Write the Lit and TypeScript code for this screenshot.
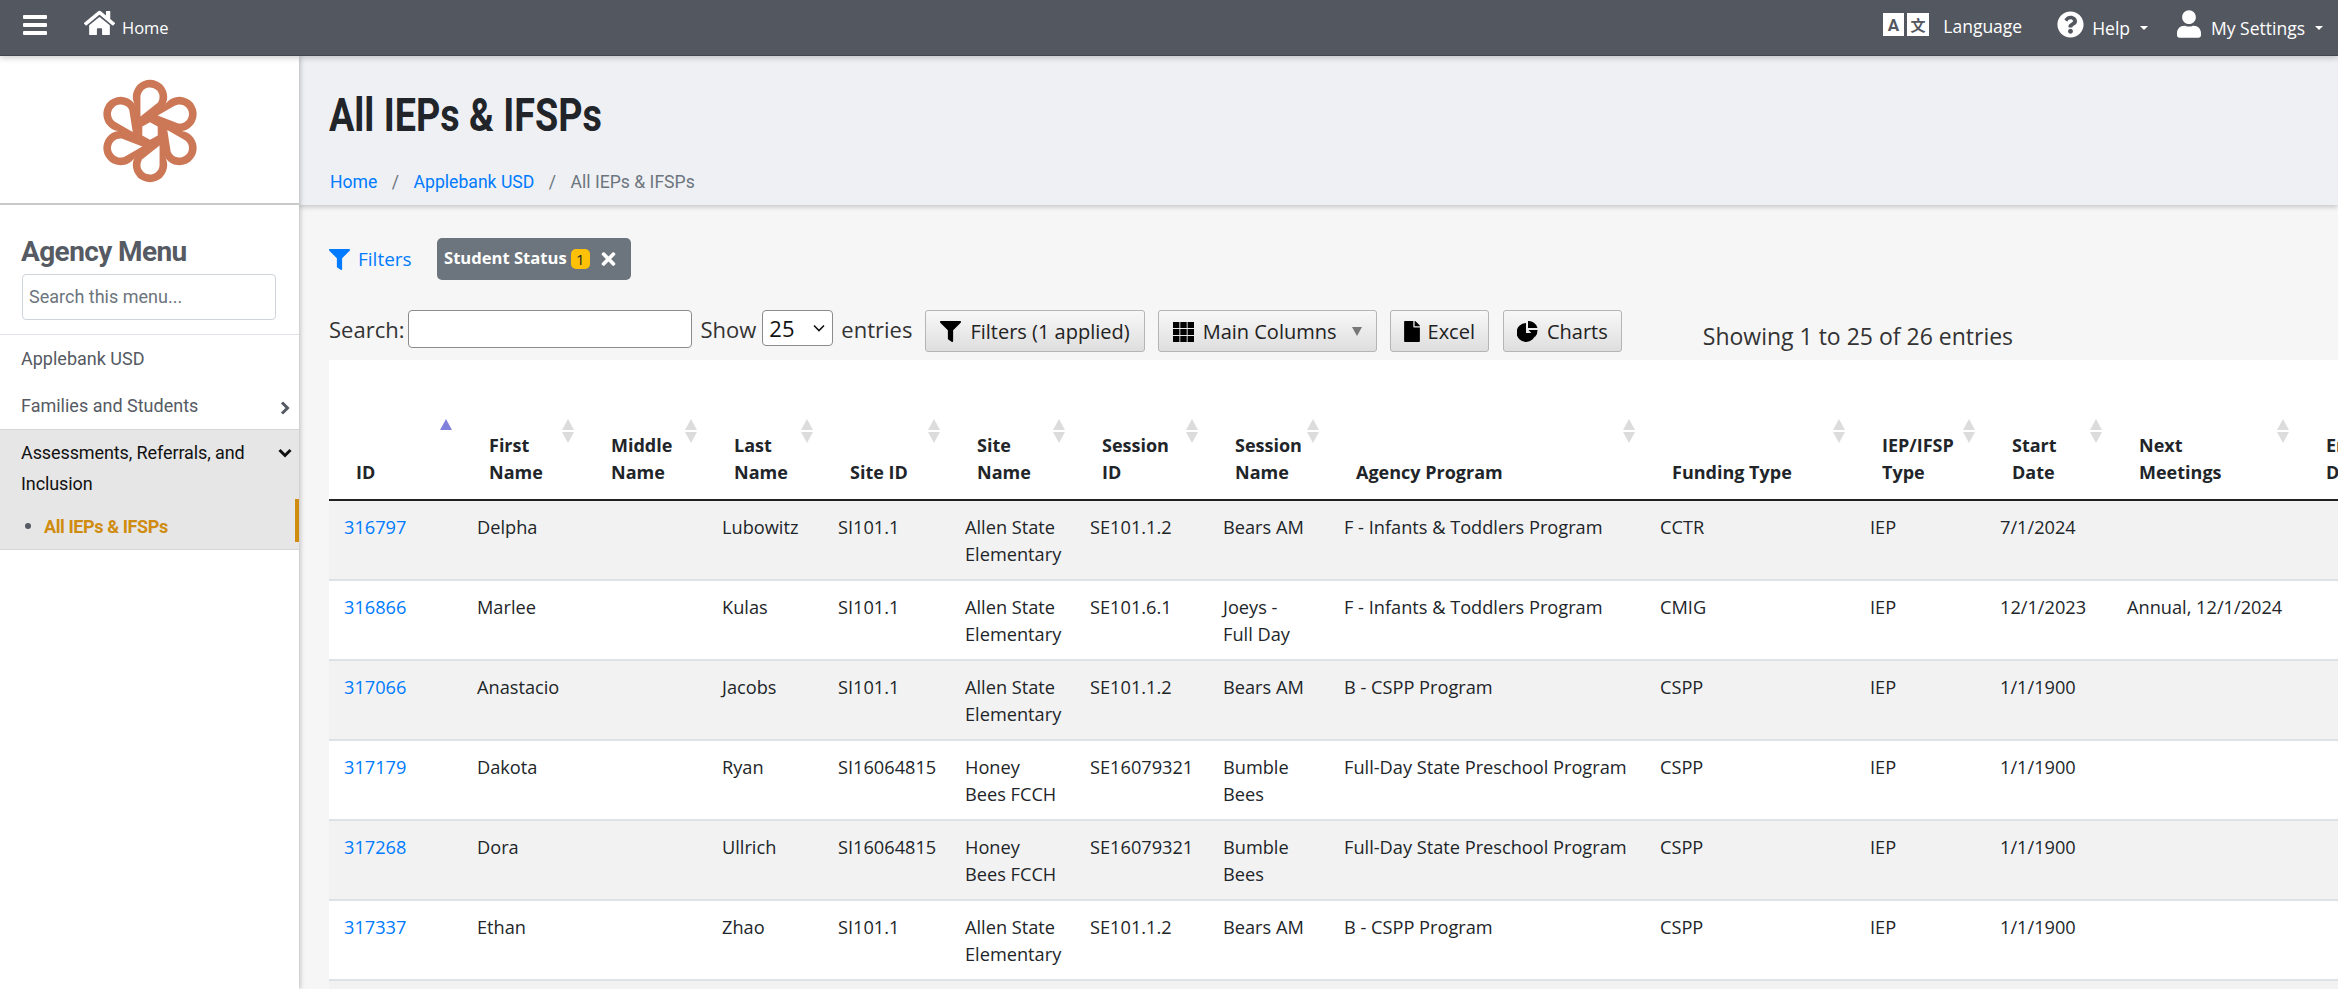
import { LitElement, html, css, svg } from "lit";
import { customElement } from "lit/decorators.js";

const P = {
  home: "M280.37 148.26L96 300.11V464a16 16 0 0 0 16 16l112.06-.29a16 16 0 0 0 15.92-16V368a16 16 0 0 1 16-16h64a16 16 0 0 1 16 16v95.64a16 16 0 0 0 16 16.05L464 480a16 16 0 0 0 16-16V300L295.67 148.26a12.19 12.19 0 0 0-15.3 0zM571.6 251.47L488 182.56V44.05a12 12 0 0 0-12-12h-56a12 12 0 0 0-12 12v72.61L318.47 43a48 48 0 0 0-61 0L4.34 251.47a12 12 0 0 0-1.6 16.9l25.5 31A12 12 0 0 0 45.15 301l235.22-193.74a12.19 12.19 0 0 1 15.3 0L530.9 301a12 12 0 0 0 16.9-1.6l25.5-31a12 12 0 0 0-1.7-16.93z",
  help: "M504 256c0 136.997-111.043 248-248 248S8 392.997 8 256C8 119.083 119.043 8 256 8s248 111.083 248 248zM262.655 90c-54.497 0-89.255 22.957-116.549 63.758-3.536 5.286-2.353 12.415 2.715 16.258l34.699 26.31c5.205 3.947 12.621 3.008 16.665-2.122 17.864-22.658 30.113-35.797 57.303-35.797 20.429 0 45.698 13.148 45.698 32.958 0 14.976-12.363 22.667-32.534 33.976C247.128 238.528 216 254.941 216 296v4c0 6.627 5.373 12 12 12h56c6.627 0 12-5.373 12-12v-1.333c0-28.462 83.186-29.647 83.186-106.667 0-58.002-60.165-102-116.531-102zM256 338c-25.365 0-46 20.635-46 46 0 25.364 20.635 46 46 46s46-20.636 46-46c0-25.365-20.635-46-46-46z",
  user: "M224 256c70.7 0 128-57.3 128-128S294.7 0 224 0 96 57.3 96 128s57.3 128 128 128zm89.6 32h-16.7c-22.2 10.2-46.9 16-72.9 16s-50.6-5.8-72.9-16h-16.7C60.2 288 0 348.2 0 422.4V464c0 26.5 21.5 48 48 48h352c26.5 0 48-21.5 48-48v-41.6c0-74.2-60.2-134.4-134.4-134.4z",
  filter: "M487.976 0H24.028C2.71 0-8.047 25.866 7.058 40.971L192 225.941V432c0 7.831 3.821 15.17 10.237 19.662l80 55.98C298.02 518.69 320 507.493 320 487.98V225.941l184.947-184.97C520.021 25.896 509.338 0 487.976 0z",
  times: "M242.72 256l100.07-100.07c12.28-12.28 12.28-32.19 0-44.48l-22.24-22.24c-12.28-12.28-32.19-12.28-44.48 0L176 189.28 75.93 89.21c-12.28-12.28-32.19-12.28-44.48 0L9.21 111.45c-12.28 12.28-12.28 32.19 0 44.48L109.28 256 9.21 356.07c-12.28 12.28-12.28 32.19 0 44.48l22.24 22.24c12.28 12.28 32.2 12.28 44.48 0L176 322.72l100.07 100.07c12.28 12.28 32.2 12.28 44.48 0l22.24-22.24c12.28-12.28 12.28-32.19 0-44.48L242.72 256z",
  file: "M224 136V0H24C10.7 0 0 10.7 0 24v464c0 13.3 10.7 24 24 24h336c13.3 0 24-10.7 24-24V160H248c-13.2 0-24-10.8-24-24zm160-14.1v6.1H256V0h6.1c6.4 0 12.5 2.5 17 7l97.9 98c4.5 4.5 7 10.6 7 16.9z",
};

const icon = (d: string, vb: string, cls: string) =>
  html`<svg class=${cls} viewBox=${vb} fill="currentColor"><path d=${d}></path></svg>`;

const petals = [0, 60, 120, 180, 240, 300];

const COLS: [string, string, number][] = [
  ["ID", "", 133],
  ["First", "Name", 122],
  ["Middle", "Name", 123],
  ["Last", "Name", 116],
  ["", "Site ID", 127],
  ["Site", "Name", 125],
  ["Session", "ID", 133],
  ["Session", "Name", 121],
  ["", "Agency Program", 316],
  ["", "Funding Type", 210],
  ["IEP/IFSP", "Type", 130],
  ["Start", "Date", 127],
  ["Next", "Meetings", 187],
  ["End", "Date", 130],
];

const ROWS: string[][] = [
  ["316797", "Delpha", "", "Lubowitz", "SI101.1", "Allen State Elementary", "SE101.1.2", "Bears AM", "F - Infants & Toddlers Program", "CCTR", "IEP", "7/1/2024", "", ""],
  ["316866", "Marlee", "", "Kulas", "SI101.1", "Allen State Elementary", "SE101.6.1", "Joeys -\nFull Day", "F - Infants & Toddlers Program", "CMIG", "IEP", "12/1/2023", "Annual, 12/1/2024", ""],
  ["317066", "Anastacio", "", "Jacobs", "SI101.1", "Allen State Elementary", "SE101.1.2", "Bears AM", "B - CSPP Program", "CSPP", "IEP", "1/1/1900", "", ""],
  ["317179", "Dakota", "", "Ryan", "SI16064815", "Honey Bees FCCH", "SE16079321", "Bumble Bees", "Full-Day State Preschool Program", "CSPP", "IEP", "1/1/1900", "", ""],
  ["317268", "Dora", "", "Ullrich", "SI16064815", "Honey Bees FCCH", "SE16079321", "Bumble Bees", "Full-Day State Preschool Program", "CSPP", "IEP", "1/1/1900", "", ""],
  ["317337", "Ethan", "", "Zhao", "SI101.1", "Allen State Elementary", "SE101.1.2", "Bears AM", "B - CSPP Program", "CSPP", "IEP", "1/1/1900", "", ""],
];

@customElement("app-root")
export class AppRoot extends LitElement {
  static styles = css`
    :host { display: block; width: 2338px; height: 989px; overflow: hidden; background: #f6f6f6; font-family: "Open Sans", "Noto Sans", sans-serif; color: #212529; }
    * { box-sizing: border-box; }
    a { color: #007bff; text-decoration: none; }

    .top { height: 56px; background: #53575f; border-bottom: 1px solid #43464d; color: #fff; display: flex; align-items: center; padding-left: 23px; position: relative; z-index: 3; box-shadow: 0 2px 6px rgba(0,0,0,.2); font-size: 16px; }
    .burger { width: 24px; height: 20px; display: flex; flex-direction: column; justify-content: space-between; margin-top: -6px; }
    .burger i { display: block; height: 4px; background: #fff; border-radius: 1px; }
    .home { display: flex; align-items: center; margin-left: 37px; }
    .home svg { width: 31px; height: 28px; margin-top: -10px; }
    .home span { margin-left: 7px; font-size: 16.5px; }
    .right { margin-left: auto; display: flex; align-items: center; padding-right: 15px; height: 100%; font-size: 17.5px; }
    .lang { width: 46px; height: 23px; margin-top: -6px; margin-right: 14px; }
    .lang-t { margin-top: -3px; margin-right: 35px; }
    .help { width: 27px; height: 27px; margin-top: -7px; margin-right: 8px; }
    .usr { width: 24px; height: 28px; margin-top: -7px; margin-right: 10px; }
    .caret { width: 0; height: 0; border-left: 4px solid transparent; border-right: 4px solid transparent; border-top: 4px solid #fff; margin-left: 10px; }
    .help-c { margin-right: 29px; }

    .body { display: flex; height: 933px; }
    .side { width: 299px; flex: none; background: #fff; box-shadow: 1px 0 5px rgba(0,0,0,.25); position: relative; z-index: 2; font-family: Roboto, sans-serif; color: #555a63; }
    .logo { height: 149px; border-bottom: 2px solid #c9c9c9; display: flex; justify-content: center; align-items: flex-start; padding-top: 23px; }
    .logo svg { width: 96px; height: 104px; }
    .side h2 { margin: 0; padding: 29px 0 0 21px; font-size: 28px; line-height: 36px; font-weight: 700; letter-spacing: -.6px; }
    .srch { display: block; margin: 4px 0 14px 22px; width: 254px; height: 46px; border: 1px solid #ced4da; border-radius: 4px; padding: 0 6px; font-size: 18px; line-height: 44px; color: #6c757d; }
    .srch-wrap { border-bottom: 1px solid #dfe2e6; }
    .item { display: flex; justify-content: space-between; align-items: center; font-size: 18px; padding: 0 9px 0 21px; height: 47px; }
    .item svg { width: 10px; height: 14px; margin-top: 4px; }
    .group { background: #e6e6e6; border-top: 1px solid #d5d5d5; border-bottom: 1px solid #d5d5d5; color: #111; height: 121px; }
    .group-h { display: flex; justify-content: space-between; font-size: 18px; line-height: 31px; padding: 7px 7px 0 21px; letter-spacing: -.1px; }
    .group-h svg { width: 14px; height: 10px; margin-top: 11px; flex: none; }
    .sub { display: flex; align-items: center; height: 43px; margin-top: 0; border-right: 4px solid #d08c10; font-size: 18px; font-weight: 700; color: #d08c10; padding: 11px 0 0 25px; letter-spacing: -.4px; }
    .sub i { width: 6px; height: 6px; border-radius: 50%; background: #555a63; margin-right: 13px; }

    .main { flex: 1; min-width: 0; overflow: hidden; }
    .hdr { height: 149px; background: #eff0f4; box-shadow: 0 2px 5px rgba(0,0,0,.2); padding: 32px 0 0 30px; font-family: Roboto, sans-serif; }
    .hdr h1 { margin: 0; font-size: 46px; font-weight: 700; line-height: 54px; color: #212529; transform: scaleX(.82); transform-origin: left center; white-space: nowrap; }
    .crumbs { margin-top: 27px; padding-left: 1px; font-size: 17.6px; line-height: 27px; color: #6c757d; display: flex; }
    .crumbs b { font-weight: 400; padding: 0 14.5px; }

    .chips { display: flex; align-items: center; height: 42px; margin: 33px 0 0 30px; }
    .flt { display: flex; align-items: center; color: #007bff; font-size: 19px; width: 108px; }
    .flt svg { width: 21px; height: 21px; margin-right: 8px; }
    .chip { width: 194px; height: 42px; background: #6c757d; border-radius: 5px; color: #fff; display: flex; align-items: center; padding-left: 7px; font-size: 16.6px; font-weight: 700; }
    .chip span { margin-top: -3px; }
    .bdg { width: 19px; height: 20px; border-radius: 5px; background: #ffc107; color: #212529; font-size: 15px; font-weight: 400; display: flex; justify-content: center; align-items: center; margin-left: 4px; }
    .chip svg { width: 15px; height: 20px; margin-left: 11px; }

    .bar { display: flex; align-items: flex-start; height: 50px; margin: 30px 0 0 30px; font-size: 22px; line-height: 38px; color: #333; }
    .inp { width: 284px; height: 38px; margin-left: 4px; border: 1px solid #8b8b8b; border-radius: 4px; background: #fff; flex: none; }
    .lab { margin-left: 8px; }
    .sel { width: 71px; height: 36px; margin-left: 6px; border: 1px solid #8b8b8b; border-radius: 4px; background: #fff; display: flex; align-items: center; padding-left: 6px; justify-content: space-between; padding-right: 7px; font-size: 22px; color: #111; flex: none; }
    .sel svg { width: 12px; height: 8px; }
    .btn { height: 42px; border: 1px solid #b5b5b5; border-radius: 3px; background: linear-gradient(#f8f8f8, #dedede); display: flex; align-items: center; padding: 1px 14px 0; font-size: 20px; line-height: 1; color: #222; flex: none; }
    .btn.tight { padding: 1px 13px 0; }
    .btn svg { margin-right: 9px; color: #000; }
    .btn .i1 { width: 21px; height: 21px; }
    .btn .i2 { width: 21px; height: 20px; }
    .btn .i3 { width: 16px; height: 21px; margin-right: 8px; }
    .btn .i4 { width: 21px; height: 21px; }
    .tri { width: 0; height: 0; border-left: 5px solid transparent; border-right: 5px solid transparent; border-top: 9px solid #777; margin-left: 15px; }
    .info { margin-left: 81px; margin-top: 7px; font-size: 23px; }
    .ml13 { margin-left: 13px; }
    .ml14 { margin-left: 14px; }

    .tw { margin-left: 30px; background: #fff; width: 2009px; }
    table { border-collapse: collapse; table-layout: fixed; font-size: 18.2px; line-height: 27px; width: 2100px; }
    th { position: relative; height: 140px; vertical-align: bottom; text-align: left; font-weight: 700; font-size: 18px; padding: 0 15px 13px 27px; border-bottom: 2px solid #222; color: #212529; }
    th i { position: absolute; right: 10px; width: 0; height: 0; border-left: 6px solid transparent; border-right: 6px solid transparent; }
    th .up { top: 59px; border-bottom: 11px solid #dcdcdc; }
    th .dn { top: 72px; border-top: 11px solid #dcdcdc; }
    th .up.on { border-bottom-color: #8181dc; }
    th .dn.on { border-top-color: transparent; }
    td { height: 80px; vertical-align: top; padding: 13px 15px 0; border-bottom: 2px solid #dee2e6; color: #212529; overflow: hidden; white-space: pre-line; }
    tr.odd td { background: #f2f2f2; }
    tr.blank td { background: #f2f2f2; border: 0; }
  `;

  logo() {
    return svg`<svg viewBox="-46.6 -50.5 93.2 101">
      <path d="M14.3 -24.75 L28.6 0 L14.3 24.75 L-14.3 24.75 L-28.6 0 L-14.3 -24.75 Z" fill="#cc7755"></path>
      ${petals.map((a) => svg`<circle transform="rotate(${a})" cx="0" cy="-33" r="16.7" fill="#cc7755"></circle>`)}
      ${petals.map((a) => svg`<path transform="rotate(${a})" d="M-9.3 -14 L-9.3 -33 A9.3 9.3 0 1 1 7.5 -27.5 Z" fill="#fff"></path>`)}
      <path d="M0 -8.6 L7.5 -4.3 V4.3 L0 8.6 L-7.5 4.3 V-4.3 Z" fill="#fff"></path>
    </svg>`;
  }

  render() {
    return html`
      <div class="top">
        <div class="burger"><i></i><i></i><i></i></div>
        <div class="home">${icon(P.home, "0 0 576 512", "")}<span>Home</span></div>
        <div class="right">
          <svg class="lang" viewBox="0 0 46 23">
            <rect x="0" y="0" width="21" height="23" fill="#fff"></rect>
            <rect x="24" y="0" width="22" height="23" fill="#fff"></rect>
            <text x="10.5" y="18" text-anchor="middle" font-size="17" font-weight="700" font-family="Roboto, sans-serif" fill="#53575f">A</text>
            <text x="35" y="18" text-anchor="middle" font-size="15" font-weight="700" font-family="'Noto Sans CJK SC', sans-serif" fill="#53575f">文</text>
          </svg>
          <span class="lang-t">Language</span>
          ${icon(P.help, "0 0 512 512", "help")}
          <span>Help</span><span class="caret help-c"></span>
          ${icon(P.user, "0 0 448 512", "usr")}
          <span>My Settings</span><span class="caret"></span>
        </div>
      </div>
      <div class="body">
        <div class="side">
          <div class="logo">${this.logo()}</div>
          <div class="srch-wrap">
            <h2>Agency Menu</h2>
            <div class="srch">Search this menu...</div>
          </div>
          <div class="item">Applebank USD</div>
          <div class="item">Families and Students
            <svg viewBox="0 0 10 14" fill="none" stroke="#555a63" stroke-width="3"><path d="M2 1.5 L7.5 7 L2 12.5"></path></svg>
          </div>
          <div class="group">
            <div class="group-h"><span>Assessments, Referrals, and<br />Inclusion</span>
              <svg viewBox="0 0 14 10" fill="none" stroke="#111" stroke-width="3"><path d="M1.5 2 L7 7.5 L12.5 2"></path></svg>
            </div>
            <div class="sub"><i></i>All IEPs &amp; IFSPs</div>
          </div>
        </div>
        <div class="main">
          <div class="hdr">
            <h1>All IEPs &amp; IFSPs</h1>
            <div class="crumbs"><a href="#">Home</a><b>/</b><a href="#">Applebank USD</a><b>/</b><span>All IEPs &amp; IFSPs</span></div>
          </div>
          <div class="chips">
            <div class="flt">${icon(P.filter, "0 0 512 512", "")}Filters</div>
            <div class="chip"><span>Student Status</span><div class="bdg">1</div>${icon(P.times, "0 0 352 512", "")}</div>
          </div>
          <div class="bar">
            <span>Search:</span><div class="inp"></div>
            <span class="lab">Show</span>
            <div class="sel">25<svg viewBox="0 0 12 8" fill="none" stroke="#111" stroke-width="1.6"><path d="M1 1.5 L6 6.5 L11 1.5"></path></svg></div>
            <span class="lab">entries</span>
            <div class="btn ml13">${icon(P.filter, "0 0 512 512", "i1")}Filters (1 applied)</div>
            <div class="btn ml13">
              <svg class="i2" viewBox="0 0 21 20" fill="currentColor">${[0, 7.3, 14.6].flatMap((x) => [0, 7, 14].map((y) => svg`<rect x=${x} y=${y} width="6.4" height="6"></rect>`))}</svg>
              Main Columns<span class="tri"></span></div>
            <div class="btn tight ml13">${icon(P.file, "0 0 384 512", "i3")}Excel</div>
            <div class="btn tight ml14">
              <svg class="i4" viewBox="0 0 21 21" fill="currentColor"><path d="M9 2 A9.5 9.5 0 1 0 18.5 12 H9 Z"></path><path d="M11 0 A9.5 9.5 0 0 1 20.5 7 H11 Z"></path><path d="M11.5 9 H20.5 A9.5 9.5 0 0 1 18 16 Z"></path></svg>
              Charts</div>
            <div class="info">Showing 1 to 25 of 26 entries</div>
          </div>
          <div class="tw">
            <table>
              <colgroup>${COLS.map((c) => html`<col style="width:${c[2]}px" />`)}</colgroup>
              <thead><tr>${COLS.map((c, i) => html`<th>
                <i class="up ${i === 0 ? "on" : ""}"></i><i class="dn ${i === 0 ? "on" : ""}"></i>
                ${c[0]}${c[0] ? html`<br />` : ""}${c[1]}</th>`)}</tr></thead>
              <tbody>
                ${ROWS.map((r, i) => html`<tr class=${i % 2 ? "" : "odd"}>${r.map((v, j) => html`<td>${j === 0 ? html`<a href="#">${v}</a>` : v}</td>`)}</tr>`)}
                <tr class="blank">${COLS.map(() => html`<td></td>`)}</tr>
              </tbody>
            </table>
          </div>
        </div>
      </div>
    `;
  }
}
